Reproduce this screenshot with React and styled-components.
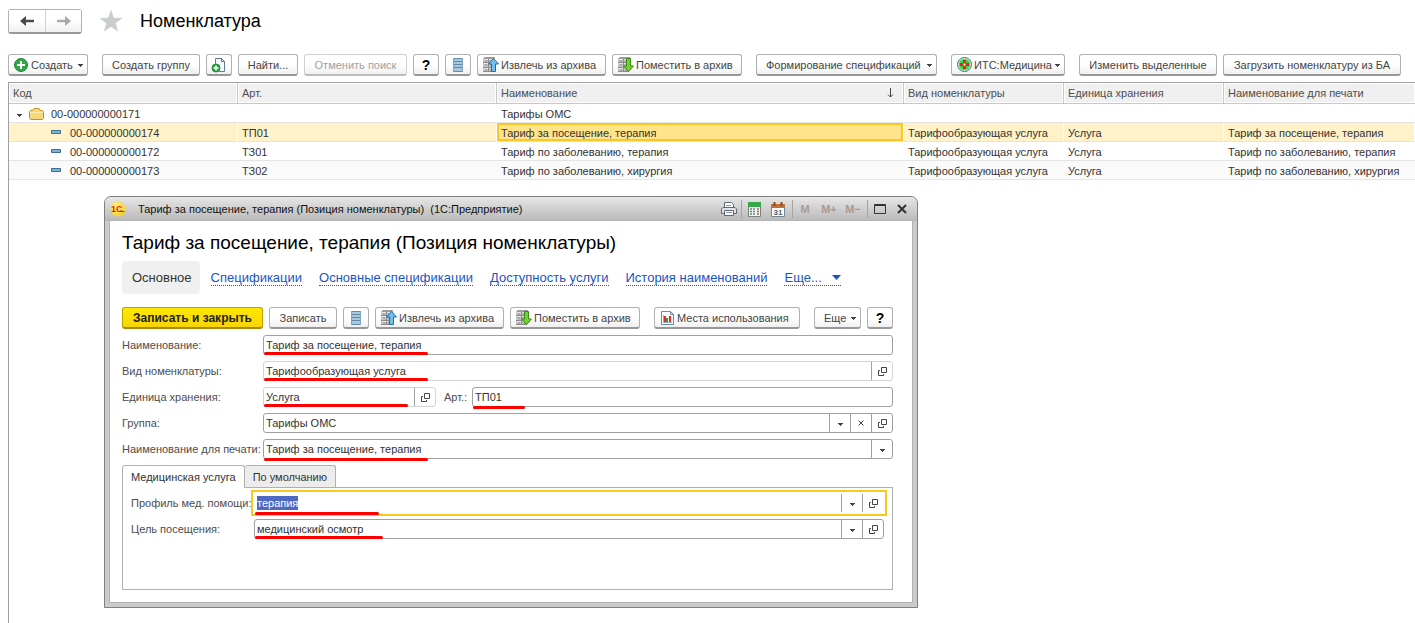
import React, { useEffect, useRef } from "react";
import styled, { createGlobalStyle, css } from "styled-components";

const COLUMNS = [
  { title: "Код", width: 229 },
  { title: "Арт.", width: 259 },
  { title: "Наименование", width: 407, sorted: true },
  { title: "Вид номенклатуры", width: 160 },
  { title: "Единица хранения", width: 160 },
  { title: "Наименование для печати" },
];

const ROWS = [
  { code: "00-000000000171", group: true, cells: ["", "Тарифы ОМС", "", "", ""] },
  {
    code: "00-000000000174",
    selected: true,
    cells: ["ТП01", "Тариф за посещение, терапия", "Тарифообразующая услуга", "Услуга", "Тариф за посещение, терапия"],
  },
  {
    code: "00-000000000172",
    cells: ["ТЗ01", "Тариф по заболеванию, терапия", "Тарифообразующая услуга", "Услуга", "Тариф по заболеванию, терапия"],
  },
  {
    code: "00-000000000173",
    even: true,
    cells: ["ТЗ02", "Тариф по заболеванию, хирургия", "Тарифообразующая услуга", "Услуга", "Тариф по заболеванию, хирургия"],
  },
];

export default function App() {
  return (
    <Page>
      <GlobalStyle />
      <PageHeader>
        <History>
          <HistoryButton type="button" aria-label="Назад"><ArrowIcon color="#4a4a4a" /></HistoryButton>
          <HistoryButton type="button" aria-label="Вперед"><ArrowIcon color="#a9a9a9" flip /></HistoryButton>
        </History>
        <StarIcon />
        <PageTitle>Номенклатура</PageTitle>
      </PageHeader>
      <Toolbar>
        <Group>
          <Button type="button" $width={80} $start><PlusIcon />Создать<Caret /></Button>
        </Group>
        <Group>
          <Button type="button" $width={98}>Создать группу</Button>
          <Button type="button" $width={26} aria-label="Скопировать"><CopyIcon /></Button>
          <Button type="button" $width={60}>Найти...</Button>
          <Button type="button" $width={103} disabled>Отменить поиск</Button>
          <Button type="button" $width={26} $help>?</Button>
          <Button type="button" $width={26} aria-label="Список"><ListIcon /></Button>
          <Button type="button" $width={129} $start><ArchiveIcon up />Извлечь из архива</Button>
          <Button type="button" $width={130} $start><ArchiveIcon />Поместить в архив</Button>
        </Group>
        <Group>
          <Button type="button" $width={181} $start $indent>Формирование спецификаций<Caret /></Button>
        </Group>
        <Group>
          <Button type="button" $width={114} $start><MedicineIcon />ИТС:Медицина<Caret /></Button>
        </Group>
        <Group>
          <Button type="button" $width={138}>Изменить выделенные</Button>
          <Button type="button" $width={178}>Загрузить номенклатуру из БА</Button>
        </Group>
      </Toolbar>
      <ItemList />
      <ItemWindow />
    </Page>
  );
}

function ItemList() {
  return (
    <ListArea>
      <Table>
        <colgroup>
          {COLUMNS.map((c) => <col key={c.title} width={c.width} />)}
        </colgroup>
        <thead>
          <tr>
            {COLUMNS.map((c) => (
              <HeadCell key={c.title} scope="col">
                <HeadInner>{c.title}{c.sorted && <SortIcon />}</HeadInner>
              </HeadCell>
            ))}
          </tr>
        </thead>
        <tbody>
          {ROWS.map((row) => (
            <Row key={row.code} $selected={row.selected} $even={row.even}>
              <Cell>
                <Code $group={row.group}>
                  {row.group ? <><Caret /><FolderIcon /></> : <ItemIcon />}
                  {row.code}
                </Code>
              </Cell>
              {row.cells.map((text, i) => (
                <Cell key={i} $active={row.selected && i === 1}>{text}</Cell>
              ))}
            </Row>
          ))}
        </tbody>
      </Table>
    </ListArea>
  );
}

function ItemWindow() {
  const profileRef = useRef(null);

  useEffect(() => {
    profileRef.current.focus();
    profileRef.current.select();
  }, []);

  return (
    <Window>
      <TitleBar>
        <LogoIcon />
        <WindowTitle>Тариф за посещение, терапия (Позиция номенклатуры)&nbsp; (1С:Предприятие)</WindowTitle>
        <TitleButton type="button" $width={20} aria-label="Печать"><PrinterIcon /></TitleButton>
        <Separator />
        <TitleButton type="button" $width={24} aria-label="Калькулятор"><CalculatorIcon /></TitleButton>
        <TitleButton type="button" $width={24} aria-label="Календарь"><CalendarIcon /></TitleButton>
        <Separator />
        <TitleButton type="button" $width={24}>M</TitleButton>
        <TitleButton type="button" $width={24}>M+</TitleButton>
        <TitleButton type="button" $width={24}>M−</TitleButton>
        <Separator />
        <TitleButton type="button" $width={24} aria-label="Развернуть"><MaximizeIcon /></TitleButton>
        <TitleButton type="button" $width={20} aria-label="Закрыть"><CloseIcon /></TitleButton>
      </TitleBar>
      <WindowBody>
        <FormTitle>Тариф за посещение, терапия (Позиция номенклатуры)</FormTitle>
        <Sections>
          <CurrentSection>Основное</CurrentSection>
          <SectionLink href="#spec">Спецификации</SectionLink>
          <SectionLink href="#main-spec">Основные спецификации</SectionLink>
          <SectionLink href="#access">Доступность услуги</SectionLink>
          <SectionLink href="#history">История наименований</SectionLink>
          <SectionLink href="#more">Еще...<LinkCaret /></SectionLink>
        </Sections>
        <Commands>
          <Group>
            <Button type="button" $width={141} $primary>Записать и закрыть</Button>
            <Button type="button" $width={68}>Записать</Button>
            <Button type="button" $width={26} aria-label="Список"><ListIcon /></Button>
            <Button type="button" $width={129} $start><ArchiveIcon up />Извлечь из архива</Button>
            <Button type="button" $width={130} $start><ArchiveIcon />Поместить в архив</Button>
          </Group>
          <Group>
            <Button type="button" $width={146} $start><ReportIcon />Места использования</Button>
          </Group>
          <Group>
            <Button type="button" $width={47} $start $indent>Еще<Caret /></Button>
            <Button type="button" $width={26} $help>?</Button>
          </Group>
        </Commands>
        <Form>
          <Line>
            <Label htmlFor="name">Наименование:</Label>
            <Field id="name" value="Тариф за посещение, терапия" mark={164} />
          </Line>
          <Line>
            <Label htmlFor="kind">Вид номенклатуры:</Label>
            <Field id="kind" value="Тарифообразующая услуга" mark={164} actions={["open"]} light />
          </Line>
          <Line>
            <Label htmlFor="unit">Единица хранения:</Label>
            <UnitSlot>
              <Field id="unit" value="Услуга" mark={144} actions={["open"]} light />
            </UnitSlot>
            <ArticleLabel htmlFor="article">Арт.:</ArticleLabel>
            <Field id="article" value="ТП01" mark={52} low />
          </Line>
          <Line>
            <Label htmlFor="group">Группа:</Label>
            <Field id="group" value="Тарифы ОМС" actions={["drop", "clear", "open"]} />
          </Line>
          <Line>
            <Label htmlFor="print">Наименование для печати:</Label>
            <Field id="print" value="Тариф за посещение, терапия" mark={164} actions={["drop"]} low />
          </Line>
        </Form>
        <Tabs role="tablist">
          <Tab type="button" role="tab" aria-selected="true" $active>Медицинская услуга</Tab>
          <Tab type="button" role="tab" aria-selected="false">По умолчанию</Tab>
        </Tabs>
        <Panel role="tabpanel">
          <Line>
            <Label htmlFor="profile" $narrow>Профиль мед. помощи:</Label>
            <Field id="profile" value="терапия" mark={124} actions={["drop", "open"]} inputRef={profileRef} focused low />
          </Line>
          <Line>
            <Label htmlFor="purpose" $narrow>Цель посещения:</Label>
            <Field id="purpose" value="медицинский осмотр" mark={128} actions={["drop", "open"]} />
          </Line>
        </Panel>
      </WindowBody>
    </Window>
  );
}

const ACTIONS = {
  drop: { label: "Выбрать из списка", icon: <Caret /> },
  clear: { label: "Очистить", icon: <ClearIcon /> },
  open: { label: "Открыть", icon: <OpenIcon /> },
};

function Field({ id, value, mark, actions = [], inputRef, focused, light, low }) {
  return (
    <FieldBox $light={light} $focused={focused}>
      <Input id={id} type="text" defaultValue={value} ref={inputRef} />
      {actions.map((name) => (
        <FieldButton key={name} type="button" aria-label={ACTIONS[name].label}>
          {ACTIONS[name].icon}
        </FieldButton>
      ))}
      {mark && <Mark $width={mark} $low={low} />}
    </FieldBox>
  );
}

// Icons
function Caret() {
  return (
    <CaretSvg width="5" height="5" viewBox="0 0 5 5" shapeRendering="crispEdges">
      <path d="M0 2h5v1h-1v1h-1v1h-1v-1h-1v-1h-1z" fill="#444" />
    </CaretSvg>
  );
}

function LinkCaret() {
  return (
    <CaretSvg width="9" height="5" viewBox="0 0 9 5">
      <path d="M0 0h9L4.500 5z" fill="#1a55c0" />
    </CaretSvg>
  );
}

function ArrowIcon({ color, flip }) {
  return (
    <svg width="14" height="12" viewBox="0 0 14 12">
      <path
        d={flip ? "M0 4.800h8V1l6 5-6 5V7.200H0z" : "M14 4.800H6V1L0 6l6 5V7.200h8z"}
        fill={color}
      />
    </svg>
  );
}

function StarIcon() {
  return (
    <svg width="24" height="24" viewBox="0 0 24 24">
      <path d="M12 .500l2.900 8.300 8.800.200-7 5.300 2.500 8.400L12 17.700l-7.200 5 2.500-8.400-7-5.300 8.800-.200z" fill="#cbced1" />
    </svg>
  );
}

function PlusIcon() {
  return (
    <svg width="15" height="14" viewBox="0 0 15 14">
      <circle cx="7" cy="7" r="6.500" fill="#31a846" stroke="#238536" />
      <path d="M7 3v8M3 7h8" stroke="#fff" strokeWidth="2" />
    </svg>
  );
}

function CopyIcon() {
  return (
    <svg width="16" height="16" viewBox="0 0 16 16">
      <path d="M4.500 10V1.500h6l3 3v10H8" fill="#f7fafc" stroke="#617b91" />
      <path d="M10.500 1.500v3h3" fill="none" stroke="#617b91" />
      <circle cx="5" cy="11" r="4" fill="#31a846" stroke="#238536" />
      <path d="M5 8.500v5M2.500 11h5" stroke="#fff" strokeWidth="1.500" />
    </svg>
  );
}

function ListIcon() {
  return (
    <svg width="10" height="14" viewBox="0 0 10 14" shapeRendering="crispEdges">
      <path d="M0 0h10v14H0z" fill="#a9c8dd" />
      <path d="M0 0h10v1H0zM0 3h10v1H0zM0 6h10v1H0zM0 9h10v1H0zM0 13h10v1H0z" fill="#5f8aa8" />
      <path d="M0 0h1v14H0zM9 0h1v14H9z" fill="#7fa5bf" />
    </svg>
  );
}

function ArchiveIcon({ up }) {
  return (
    <svg width="16" height="16" viewBox="0 0 16 16">
      <path d="M0 2l2-2h10v14l-1 1H0z" fill="#c4c4c4" />
      <path d="M0 2l2-2h10v1L11 2z" fill="#9c9c9c" />
      <path d="M0 5.500h11M0 10.500h11M0 14.500h11M5.500 2v13" stroke="#8c8c8c" />
      <path d="M1 2.500h4M6.500 2.500h4M1 6.500h4M6.500 6.500h4M1 11.500h4M6.500 11.500h4" stroke="#e8e8e8" />
      <path d="M2 4h2M7 4h2M2 8h2M7 8h2M2 13h2M7 13h2" stroke="#8c8c8c" />
      {up ? (
        <path d="M10.500 1.500l5 5.500h-3v7.500h-4V7h-3z" fill="#70c0ee" stroke="#1b6eaa" />
      ) : (
        <path d="M10.500 14.500l5-5.500h-3V1.500h-4V9h-3z" fill="#74d12d" stroke="#378a16" />
      )}
    </svg>
  );
}

function MedicineIcon() {
  return (
    <svg width="15" height="15" viewBox="0 0 15 15">
      <circle cx="7.500" cy="7.500" r="7" fill="#c7ecd2" stroke="#3a7a70" />
      <circle cx="7.500" cy="7.500" r="5.500" fill="#35d83f" />
      <path d="M6 3h3v3h3v3H9v3H6V9H3V6h3z" fill="#e52620" />
      <path d="M6.500 6.500h2v2h-2z" fill="#fff" />
    </svg>
  );
}

function ReportIcon() {
  return (
    <svg width="15" height="14" viewBox="-1 0 15 14">
      <path d="M.500.500h9l3 3v10H.500z" fill="#f7fbfd" stroke="#6b8ba3" />
      <path d="M9.500.500v3h3" fill="none" stroke="#6b8ba3" />
      <path d="M2.500 4v7.500H11" fill="none" stroke="#9aacb8" />
      <path d="M3 5h2v6H3z" fill="#e32a24" />
      <path d="M5 7h2v4H5z" fill="#2aa33c" />
      <path d="M8 5h2v6H8z" fill="#e32a24" />
    </svg>
  );
}

function SortIcon() {
  return (
    <svg width="7" height="10" viewBox="0 0 7 10">
      <path d="M3.500 0v9M1 6.500l2.500 2.500L6 6.500" fill="none" stroke="#444" />
    </svg>
  );
}

function FolderIcon() {
  return (
    <svg width="15" height="12" viewBox="0 0 15 12">
      <path d="M.500 10.500v-7l1-1h2l1.500-2h5l1 2h2.500l1 1v7l-1 1h-12z" fill="#f6d77a" stroke="#c39432" />
      <path d="M1 4.500h13" stroke="#fdedb5" />
    </svg>
  );
}

function ItemIcon() {
  return (
    <svg width="10" height="8" viewBox="0 0 10 8">
      <path d="M.500 1.500h9v3h-9z" fill="#79b3d6" stroke="#40718f" />
    </svg>
  );
}

function LogoIcon() {
  return (
    <svg width="16" height="16" viewBox="0 0 16 16">
      <defs>
        <radialGradient id="logo" cx="40%" cy="30%" r="70%">
          <stop offset="0" stopColor="#fff27a" />
          <stop offset="1" stopColor="#f8cf2c" />
        </radialGradient>
      </defs>
      <circle cx="8" cy="8" r="7.500" fill="url(#logo)" />
      <text x="1" y="11" fontFamily="Liberation Sans, sans-serif" fontSize="9" fontWeight="700" fill="#dd1f1c">1С</text>
      <path d="M9 10.500h5.500" stroke="#dd1f1c" />
    </svg>
  );
}

function PrinterIcon() {
  return (
    <svg width="16" height="14" viewBox="0 0 16 14">
      <path d="M3.500 6V.500h7l2 2V6" fill="#fff" stroke="#5e6b74" />
      <path d="M.500 11.500V7l1.500-1.500h12L15.500 7v4.500z" fill="#dfe3e6" stroke="#5e6b74" />
      <path d="M3.500 8.500h9v5h-9z" fill="#f5f7f8" stroke="#5e6b74" />
      <path d="M5 3.500h5M5 10.500h6" stroke="#8b97a0" />
    </svg>
  );
}

function CalculatorIcon() {
  return (
    <svg width="13" height="15" viewBox="0 0 13 15">
      <path d="M.500.500h12v14H.500z" fill="#f3f5f3" stroke="#758678" />
      <path d="M0 0h13v5H0z" fill="#35a64a" />
      <path d="M2 7h2M5 7h2M2 9.500h2M5 9.500h2M2 12h2M5 12h2" stroke="#6f7f88" strokeWidth="1.500" />
      <path d="M9 7h2M9 9.500h2M9 12h2" stroke="#b45a45" strokeWidth="1.500" />
    </svg>
  );
}

function CalendarIcon() {
  return (
    <svg width="14" height="15" viewBox="0 0 14 15">
      <path d="M.500 2.500h13v12H.500z" fill="#fff" stroke="#738695" />
      <path d="M0 2h14v4H0z" fill="#c1713a" />
      <path d="M3.500 0v4M10.500 0v4" stroke="#8a4a20" strokeWidth="2" />
      <text x="7" y="13" textAnchor="middle" fontFamily="Liberation Sans, sans-serif" fontSize="8" fontWeight="700" fill="#4f5f6a">31</text>
    </svg>
  );
}

function MaximizeIcon() {
  return (
    <svg width="12" height="10" viewBox="0 0 12 10">
      <path d="M.500.500h11v9H.500zM0 1.500h12" fill="none" stroke="#333" />
    </svg>
  );
}

function CloseIcon() {
  return (
    <svg width="10" height="10" viewBox="0 0 10 10">
      <path d="M1 1l8 8M9 1L1 9" stroke="#333" strokeWidth="2" />
    </svg>
  );
}

function ClearIcon() {
  return (
    <svg width="6" height="6" viewBox="0 0 6 6">
      <path d="M.500.500l5 5M5.500.500l-5 5" stroke="#444" />
    </svg>
  );
}

function OpenIcon() {
  return (
    <svg width="9" height="9" viewBox="0 0 9 9">
      <path d="M3.500.500h5v5h-5zM2 3.500H.500v5h5V7" fill="none" stroke="#444" />
    </svg>
  );
}

const GlobalStyle = createGlobalStyle`
  * {
    box-sizing: border-box;
  }
  body {
    margin: 0;
    background: #fff;
    color: #333;
    font: 11px/14px "Liberation Sans", Arial, sans-serif;
  }
  button, input {
    font: inherit;
    color: inherit;
    margin: 0;
    padding: 0;
  }
  svg {
    display: block;
    flex: none;
  }
`;

// Page
const Page = styled.main`
  position: relative;
  display: flex;
  flex-direction: column;
  min-height: 100vh;
  padding: 8px 0 0 8px;
  overflow: hidden;
`;
const PageHeader = styled.header`
  display: flex;
  align-items: center;
  height: 26px;
  margin-bottom: 20px;
  gap: 17px;
`;
const History = styled.div`
  display: flex;
  height: 25px;
  border: 1px solid #b0b0b0;
  border-bottom: 2px solid #989898;
  border-radius: 3px;
`;
const HistoryButton = styled.button`
  display: flex;
  align-items: center;
  justify-content: center;
  width: 36px;
  border: 0;
  background: linear-gradient(#fff 50%, #f0f0f0);
  & + & {
    border-left: 1px solid #d0d0d0;
  }
`;
const PageTitle = styled.h1`
  margin: 0;
  color: #000;
  font-size: 18px;
  line-height: 24px;
  font-weight: 400;
`;
const Toolbar = styled.div`
  display: flex;
  gap: 14px;
  margin-bottom: 6px;
`;
const Group = styled.div`
  display: flex;
  gap: 6px;
`;
const CaretSvg = styled.svg``;
const Button = styled.button`
  display: flex;
  flex: none;
  align-items: center;
  justify-content: ${({ $start }) => ($start ? "flex-start" : "center")};
  gap: 2px;
  width: ${({ $width }) => $width}px;
  height: 22px;
  padding: ${({ $start, $indent }) => ($start ? ($indent ? "0 4px 0 9px" : "0 4px 0 5px") : "0")};
  border: 1px solid #b0b0b0;
  border-bottom: 2px solid #989898;
  border-radius: 3px;
  background: linear-gradient(#fff 50%, #f0f0f0);
  color: #444;
  white-space: nowrap;

  ${CaretSvg} {
    margin-left: auto;
  }
  &:disabled {
    border-color: #d0d0d0;
    border-bottom-color: #bcbcbc;
    color: #a0a0a0;
  }
  ${({ $help }) => $help && css`
    color: #000;
    font-size: 14px;
    font-weight: 700;
  `}
  ${({ $primary }) => $primary && css`
    border-color: #b8a000;
    border-bottom-color: #a08c00;
    background: linear-gradient(#ffe800, #f8d500);
    color: #222;
    font-size: 12px;
    font-weight: 700;
  `}
`;

// List
const ListArea = styled.section`
  flex: 1;
  border-top: 1px solid #a0a0a0;
  border-left: 1px solid #a0a0a0;
`;
const Table = styled.table`
  width: 100%;
  table-layout: fixed;
  border-collapse: separate;
  border-spacing: 0;
`;
const HeadCell = styled.th`
  height: 21px;
  padding: 1px;
  border-right: 1px solid #c8c8c8;
  border-bottom: 1px solid #c8c8c8;
  color: #4d4d4d;
  font-weight: 400;
  text-align: left;
  &:last-child {
    border-right: 0;
  }
`;
const HeadInner = styled.div`
  display: flex;
  align-items: center;
  justify-content: space-between;
  height: 18px;
  padding: 0 8px 0 3px;
  background: #f0f0f0;
  white-space: nowrap;
`;
const Cell = styled.td`
  height: 19px;
  padding: 2px 4px 0;
  border-bottom: 1px solid #e4e4e4;
  white-space: nowrap;
  ${({ $active }) => $active && css`
    background: #ffe48c;
    box-shadow: inset 0 0 0 2px #fcc81e;
  `}
`;
const Row = styled.tr`
  background: ${({ $selected, $even }) => ($selected ? "#fff2c8" : $even ? "#fafafa" : "#fff")};
  ${Cell} {
    border-right: ${({ $selected }) => ($selected ? "1px solid #fff" : 0)};
  }
`;
const Code = styled.div`
  display: flex;
  align-items: center;
  gap: ${({ $group }) => ($group ? 7 : 9)}px;
  padding-left: ${({ $group }) => ($group ? 4 : 38)}px;
`;

// Window
const Window = styled.section`
  position: absolute;
  top: 196px;
  left: 104px;
  width: 814px;
  padding: 0 5px 5px;
  border: 1px solid #808080;
  border-radius: 7px 7px 0 0;
  background: #cbcbcb;
`;
const TitleBar = styled.header`
  display: flex;
  align-items: center;
  height: 24px;
  margin: 0 -5px;
  padding: 0 5px;
  border-radius: 6px 6px 0 0;
  background: linear-gradient(#e6e6e6, #b9b9b9);
`;
const WindowTitle = styled.div`
  flex: 1;
  margin-left: 12px;
  color: #111;
`;
const TitleButton = styled.button`
  display: flex;
  align-items: center;
  justify-content: center;
  width: ${({ $width }) => $width}px;
  height: 20px;
  border: 0;
  background: none;
  color: #a99a92;
  font-size: 11px;
  font-weight: 700;
`;
const Separator = styled.div`
  width: 1px;
  height: 18px;
  margin-left: 2px;
  background: #a4a4a4;
`;
const WindowBody = styled.div`
  padding: 10px 19px 12px 12px;
  background: #fff;
  box-shadow: 0 0 0 1px #b4b4b4;
`;
const FormTitle = styled.h2`
  margin: 0 0 6px;
  color: #000;
  font-size: 19px;
  line-height: 24px;
  font-weight: 400;
`;
const Sections = styled.nav`
  display: flex;
  align-items: center;
  gap: 17px;
  margin-bottom: 13px;
  font-size: 13px;
  line-height: 15px;
  white-space: nowrap;
`;
const CurrentSection = styled.span`
  margin-right: -6px;
  padding: 9px 8px 9px 10px;
  border-radius: 4px;
  background: #f0f0f0;
  color: #333;
`;
const SectionLink = styled.a`
  display: flex;
  align-items: center;
  gap: 10px;
  padding-top: 1px;
  border-bottom: 1px dotted #1a55c0;
  color: #1a55c0;
  text-decoration: none;
`;
const Commands = styled.div`
  display: flex;
  gap: 14px;
  margin-bottom: 6px;
`;
const Form = styled.div`
  display: flex;
  flex-direction: column;
  gap: 6px;
  margin-bottom: 6px;
`;
const Line = styled.div`
  display: flex;
  align-items: center;
`;
const Label = styled.label`
  flex: none;
  width: ${({ $narrow }) => ($narrow ? 123 : 141)}px;
  color: #4d4d4d;
  white-space: nowrap;
`;
const ArticleLabel = styled.label`
  flex: none;
  width: 36px;
  padding-left: 8px;
  color: #4d4d4d;
`;
const UnitSlot = styled.div`
  display: flex;
  flex: none;
  width: 173px;
`;
const FieldBox = styled.div`
  position: relative;
  display: flex;
  flex: 1;
  height: 20px;
  border: 1px solid ${({ $light, $focused }) => ($focused ? "transparent" : $light ? "#d4d4d4" : "#a0a0a0")};
  border-radius: 3px;
  ${({ $focused }) => $focused && css`
    border-radius: 0;
    outline: 2px solid #fcc81e;
    outline-offset: 1px;
  `}
`;
const Input = styled.input`
  flex: 1;
  min-width: 0;
  padding: 0 2px;
  border: 0;
  outline: 0;
  background: none;
  &::selection {
    background: #5068c0;
    color: #fff;
  }
`;
const FieldButton = styled.button`
  display: flex;
  align-items: center;
  justify-content: center;
  width: 21px;
  border: 0;
  border-left: 1px solid #a0a0a0;
  background: none;
`;
const Mark = styled.span`
  position: absolute;
  left: 0;
  bottom: ${({ $low }) => ($low ? -3 : -1)}px;
  width: ${({ $width }) => $width}px;
  height: 3px;
  border-radius: 2px;
  background: #f00;
`;
const Tabs = styled.div`
  display: flex;
  height: 22px;
`;
const Tab = styled.button`
  height: ${({ $active }) => ($active ? 23 : 22)}px;
  padding: 0 8px;
  border: 1px solid #b0b0b0;
  border-bottom: 0;
  border-radius: 3px 3px 0 0;
  background: ${({ $active }) => ($active ? "#fff" : "#ececec")};
  z-index: 1;
  & + & {
    border-left: 0;
  }
`;
const Panel = styled.div`
  display: flex;
  flex-direction: column;
  gap: 6px;
  min-height: 103px;
  padding: 5px 8px;
  border: 1px solid #b0b0b0;
`;
